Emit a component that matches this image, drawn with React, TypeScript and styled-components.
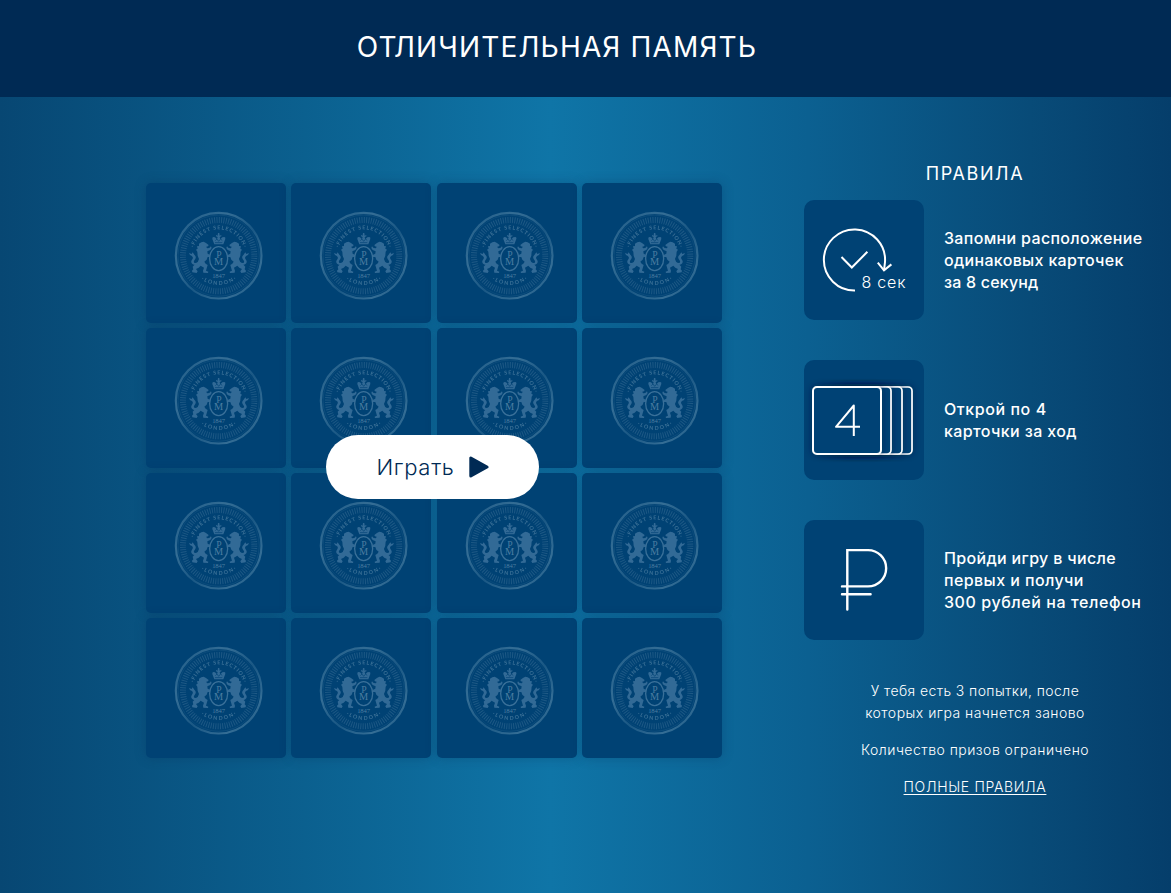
import React from "react";
import styled, { createGlobalStyle } from "styled-components";

const GlobalStyle = createGlobalStyle`
  body {
    margin: 0;
    background: #06416f;
    font-family: Inter, "Liberation Sans", sans-serif;
    color: #fff;
  }
  *, *::before, *::after { box-sizing: border-box; }
`;

const Page = styled.div`
  width: 1171px;
  height: 893px;
  display: flex;
  flex-direction: column;
  overflow: hidden;
`;

const Header = styled.header`
  height: 97px;
  padding: 0 57px 4px 0;
  background: #002a54;
  display: flex;
  align-items: center;
  justify-content: center;
`;

const Title = styled.h1`
  margin: 0;
  font-size: 28px;
  line-height: 34px;
  font-weight: 400;
  letter-spacing: 1.15px;
  white-space: nowrap;
`;

const Main = styled.main`
  flex: 1;
  display: flex;
  align-items: flex-start;
  padding-left: 146px;
  background: linear-gradient(90deg, #074773 0%, #0b608f 26%, #0f75a7 47%, #0b6091 69%, #084b78 88%, #053e6b 100%);
`;

const Board = styled.section`
  position: relative;
  width: 576px;
  margin-top: 86px;
  display: grid;
  grid-template-columns: repeat(4, 140px);
  grid-auto-rows: 140px;
  justify-content: space-between;
  row-gap: 5px;
`;

const Card = styled.div`
  display: flex;
  align-items: center;
  justify-content: center;
  padding: 5px 0 0 5.4px;
  border-radius: 5px;
  background: #004274;
  box-shadow: 0 0 12px rgba(0, 42, 84, 0.3);
`;

const PlayButton = styled.button`
  position: absolute;
  left: 180px;
  top: 252px;
  width: 213px;
  height: 64px;
  padding: 0;
  border: 0;
  border-radius: 32px;
  background: #fff;
  color: #002a54;
  font: 300 22px/28px Inter, "Liberation Sans", sans-serif;
  letter-spacing: 0.7px;
  display: flex;
  align-items: center;
  justify-content: center;
  gap: 14px;
`;

const Sidebar = styled.aside`
  width: 342px;
  margin: 67px 0 0 82px;
  display: flex;
  flex-direction: column;
`;

const SidebarTitle = styled.h2`
  margin: 0 0 16px;
  font-size: 18px;
  line-height: 20px;
  font-weight: 400;
  letter-spacing: 1.6px;
  text-align: center;
`;

const RuleList = styled.div`
  display: flex;
  flex-direction: column;
  gap: 40px;
`;

const Rule = styled.div`
  display: flex;
  align-items: center;
  gap: 20px;
  height: 120px;
`;

const RuleIcon = styled.div`
  flex: none;
  width: 120px;
  height: 120px;
  border-radius: 10px;
  background: #004274;
`;

const RuleText = styled.div`
  white-space: nowrap;
`;

const RuleLine = styled.div<{ $tracking: number }>`
  font-size: 16px;
  line-height: 22px;
  font-weight: 500;
  letter-spacing: ${(p) => p.$tracking}px;
`;

const Notes = styled.div`
  margin-top: 40px;
  display: flex;
  flex-direction: column;
  align-items: center;
  gap: 15px;
  font-size: 14px;
  line-height: 22px;
  font-weight: 300;
  text-align: center;
  white-space: nowrap;
`;

const Note = styled.p<{ $tracking: number }>`
  margin: 0;
  letter-spacing: ${(p) => p.$tracking}px;
`;

const RulesLink = styled.a`
  color: #fff;
  letter-spacing: 0.68px;
  text-decoration: underline;
  text-underline-offset: 2px;
`;

const EmblemDefs = () => (
  <svg width="0" height="0" style={{ position: "absolute" }} aria-hidden="true">
    <defs>
      <linearGradient id="ring" x1="0" y1="0" x2="1" y2="1">
        <stop offset="0" stopColor="#4b80a3" stopOpacity="0.4" />
        <stop offset="0.3" stopColor="#4b80a3" stopOpacity="0.7" />
        <stop offset="0.55" stopColor="#4b80a3" stopOpacity="0.35" />
        <stop offset="0.8" stopColor="#4b80a3" stopOpacity="0.7" />
        <stop offset="1" stopColor="#4b80a3" stopOpacity="0.3" />
      </linearGradient>
      <path id="arcTop" d="M83 166A79 79 0 0 1 241 166" />
      <path id="arcBottom" d="M74 166A88 88 0 0 0 250 166" />
      <g id="beast">
        <path d="M110 126L117 124L124 128L132 134L130 138L125 139L127 144L134 143L139 138L141 143L137 149L128 153L129 160L137 164L136 170L129 170L126 178L119 184L123 190L129 194L127 201L124 211L131 214L130 218L116 217L115 211L118 202L108 196L102 202L94 206L99 213L96 218L83 216L82 211L86 207L84 199L91 192L99 186L103 176L99 166L98 154L94 148L99 145L97 138L103 137L103 130Z" />
        <path d="M98 194C82 196 76 186 82 178C88 171 83 167 76 164L73 158L81 161L84 156L89 163C98 171 91 177 88 182C86 188 92 190 100 185Z" />
      </g>
      <symbol id="emblem" viewBox="28 32 268 268">
        <g fill="none" stroke="url(#ring)">
          <circle cx="162" cy="166" r="128.5" strokeWidth="6.5" />
          <circle cx="162" cy="166" r="122" strokeWidth="2" opacity="0.4" />
        </g>
        <circle cx="162" cy="166" r="107" fill="none" stroke="#3f7398" strokeWidth="18" strokeDasharray="2.8 4.2" opacity="0.48" />
        <g fill="#326a96">
          <use href="#beast" />
          <use href="#beast" transform="matrix(-1 0 0 1 326 0)" />
          <path d="M149 132L143 116Q142 107 151 111L157 117L159 110L154 108L154 104L159 106L160 98L164 98L165 106L170 104L170 108L165 110L167 117L173 111Q184 107 182 116L176 132Z" />
          <path d="M151 127H173M152 121L157 116L162 123L168 116L173 121" fill="none" stroke="#004274" strokeWidth="2" />
        </g>
        <ellipse cx="162" cy="175" rx="27" ry="36" fill="#004274" stroke="#397099" strokeWidth="4" />
        <g fill="#4b7da0" fontFamily="Liberation Serif, serif" textAnchor="middle">
          <text x="163" y="172" fontSize="29">P</text>
          <text x="162" y="195" fontSize="31">M</text>
          <text x="162" y="233" fontSize="20" textLength="39">1847</text>
        </g>
        <g fill="#4b7da0" opacity="0.8" fontFamily="Lato, sans-serif" fontWeight="700" fontSize="16" textAnchor="middle">
          <text textLength="198"><textPath href="#arcTop" startOffset="50%" textLength="198">·FINEST SELECTION·</textPath></text>
          <text textLength="112"><textPath href="#arcBottom" startOffset="50%" textLength="112">·LONDON·</textPath></text>
        </g>
      </symbol>
    </defs>
  </svg>
);

const Emblem = () => (
  <svg width="89.3" height="89.3"><use href="#emblem" /></svg>
);

const TimerIcon = () => (
  <svg width="120" height="120" viewBox="0 0 120 120" fill="none" stroke="#fff" strokeWidth="2">
    <path d="M51 90.6A30.6 30.6 0 1 1 81 62L80 70.4" />
    <path d="M73.8 62.6L80 70.4L87.4 64.4M37.5 57L47.8 67.5L63.4 51.8" />
    <text x="57.5" y="88" fill="#fff" stroke="none" fontFamily="Inter, sans-serif" fontWeight="300" fontSize="16" textLength="44">8 сек</text>
  </svg>
);

const CardsIcon = () => (
  <svg width="120" height="120" viewBox="0 0 120 120" fill="#004274" stroke="#fff" strokeWidth="2">
    <defs>
      <filter id="cardShadow" x="-20%" y="-20%" width="140%" height="140%">
        <feDropShadow dx="0" dy="0" stdDeviation="3.5" floodColor="#001c42" floodOpacity="0.6" />
      </filter>
    </defs>
    {[39, 29, 18, 9].map((x, i) => (
      <rect key={x} x={x} y="27" width={[69, 69, 69, 68][i]} height="67" rx="4" strokeWidth={i === 3 ? 2 : 1.7} filter="url(#cardShadow)" />
    ))}
    <path fill="none" strokeLinejoin="round" d="M49.8 76V45.5L32 66.8H56" />
  </svg>
);

const RubleIcon = () => (
  <svg width="120" height="120" viewBox="0 0 120 120" fill="none" stroke="#fff" strokeWidth="2.4" strokeLinecap="round">
    <path d="M43.3 89.6V30.1H64A18.1 18.1 0 0 1 64 66.4H38M38 74.3H66.6" />
  </svg>
);

const rules = [
  {
    Icon: TimerIcon,
    lines: [
      { text: "Запомни расположение", tracking: 0.34 },
      { text: "одинаковых карточек", tracking: 0.32 },
      { text: "за 8 секунд", tracking: 0.2 },
    ],
  },
  {
    Icon: CardsIcon,
    lines: [
      { text: "Открой по 4", tracking: 0.57 },
      { text: "карточки за ход", tracking: 0.39 },
    ],
  },
  {
    Icon: RubleIcon,
    lines: [
      { text: "Пройди игру в числе", tracking: 0.34 },
      { text: "первых и получи", tracking: 0.42 },
      { text: "300 рублей на телефон", tracking: 0.58 },
    ],
  },
];

export default function App() {
  return (
    <Page>
      <GlobalStyle />
      <EmblemDefs />
      <Header>
        <Title>ОТЛИЧИТЕЛЬНАЯ ПАМЯТЬ</Title>
      </Header>
      <Main>
        <Board>
          {Array.from({ length: 16 }, (_, i) => (
            <Card key={i}><Emblem /></Card>
          ))}
          <PlayButton>
            Играть
            <svg width="20" height="22" viewBox="0 0 20 22" fill="#002a54" stroke="#002a54" strokeWidth="3" strokeLinejoin="round">
              <path d="M1.8 2V20L18 11Z" />
            </svg>
          </PlayButton>
        </Board>
        <Sidebar>
          <SidebarTitle>ПРАВИЛА</SidebarTitle>
          <RuleList>
            {rules.map(({ Icon, lines }, i) => (
              <Rule key={i}>
                <RuleIcon><Icon /></RuleIcon>
                <RuleText>
                  {lines.map((l) => (
                    <RuleLine key={l.text} $tracking={l.tracking}>{l.text}</RuleLine>
                  ))}
                </RuleText>
              </Rule>
            ))}
          </RuleList>
          <Notes>
            <div>
              <Note $tracking={0.4}>У тебя есть 3 попытки, после</Note>
              <Note $tracking={0.48}>которых игра начнется заново</Note>
            </div>
            <Note $tracking={0.48}>Количество призов ограничено</Note>
            <RulesLink>ПОЛНЫЕ ПРАВИЛА</RulesLink>
          </Notes>
        </Sidebar>
      </Main>
    </Page>
  );
}
